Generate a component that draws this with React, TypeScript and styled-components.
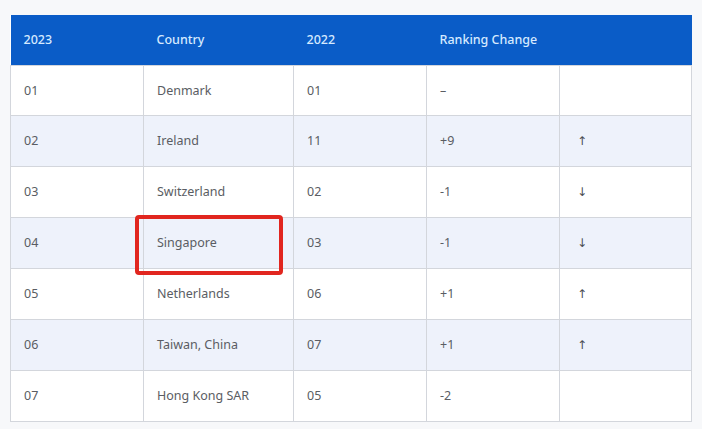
import styled, { createGlobalStyle } from "styled-components";

const GlobalStyle = createGlobalStyle`
  html, body {
    margin: 0;
    padding: 0;
    background: #f7f8fa;
    font-family: "Noto Sans", "Open Sans", sans-serif;
  }
`;

const Page = styled.div`
  width: 702px;
  height: 429px;
  box-sizing: border-box;
  padding: 15px 11px 0 10px;
  border-top: 3px solid #ececec;
  margin-top: -3px;
  overflow: hidden;
  position: relative;
`;

const Frame = styled.div`
  position: relative;
`;

const Table = styled.table`
  width: 681px;
  border-collapse: collapse;
  table-layout: fixed;
  font-size: 12.5px;
  background: #fff;
`;

const HeadRow = styled.tr`
  background: #0a5cc7;
  height: 50px;
`;

const Th = styled.th`
  text-align: left;
  font-weight: 500;
  color: #d6eaff;
  padding: 0 0 0 13px;
  border: none;
`;

const Row = styled.tr<{ $shade: boolean }>`
  height: 51px;
  background: ${({ $shade }) => ($shade ? "#eef2fb" : "#ffffff")};

  &:first-child {
    height: 50px;
  }
`;

const Td = styled.td`
  padding: 0 0 0 13px;
  color: #5a5d63;
  border: 1px solid #d3d6dc;
`;

const Arrow = styled.span`
  font-family: "DejaVu Sans", sans-serif;
  font-size: 12px;
  color: #4a4d53;
  padding-left: 4px;
`;

const Highlight = styled.div`
  position: absolute;
  left: 125px;
  top: 200px;
  width: 140px;
  height: 52px;
  border: 4px solid #e1261f;
  border-radius: 4px;
  pointer-events: none;
`;

const rows = [
  ["01", "Denmark", "01", "–", ""],
  ["02", "Ireland", "11", "+9", "↑"],
  ["03", "Switzerland", "02", "-1", "↓"],
  ["04", "Singapore", "03", "-1", "↓"],
  ["05", "Netherlands", "06", "+1", "↑"],
  ["06", "Taiwan, China", "07", "+1", "↑"],
  ["07", "Hong Kong SAR", "05", "-2", ""],
];

const widths = [133, 150, 133, 133, 132];

export default function App() {
  return (
    <>
      <GlobalStyle />
      <Page>
        <Frame>
          <Table>
            <colgroup>
              {widths.map((w, i) => (
                <col key={i} style={{ width: w }} />
              ))}
            </colgroup>
            <thead>
              <HeadRow>
                <Th>2023</Th>
                <Th>Country</Th>
                <Th>2022</Th>
                <Th>Ranking Change</Th>
                <Th></Th>
              </HeadRow>
            </thead>
            <tbody>
              {rows.map((r, i) => (
                <Row key={i} $shade={i % 2 === 1}>
                  <Td>{r[0]}</Td>
                  <Td>{r[1]}</Td>
                  <Td>{r[2]}</Td>
                  <Td>{r[3]}</Td>
                  <Td>{r[4] && <Arrow>{r[4]}</Arrow>}</Td>
                </Row>
              ))}
            </tbody>
          </Table>
          <Highlight />
        </Frame>
      </Page>
    </>
  );
}
